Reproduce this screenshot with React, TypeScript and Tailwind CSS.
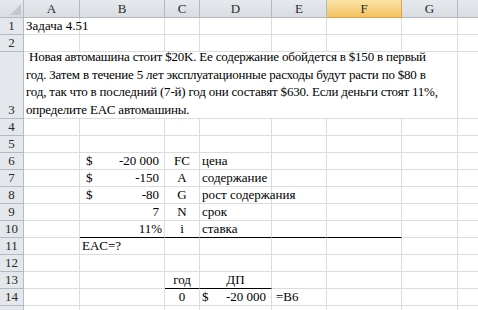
import React from 'react'

const letters = ['A', 'B', 'C', 'D', 'E', 'F', 'G', '']

// grid lines live on every cell as right + bottom borders
const cell = 'border-r border-b border-[#dadcdd] flex items-end px-[2px] leading-[16px] whitespace-nowrap overflow-visible'

const ColHead = ({ l, selected }: { l: string; selected?: boolean }) => (
  <div
    className={
      selected
        ? 'flex items-center justify-center border-r border-b border-[#e4a04a] bg-gradient-to-b from-[#fbe3a6] to-[#f2c45f] text-[#2a2a2a] leading-[16px]'
        : 'flex items-center justify-center border-r border-b border-[#b5bac1] bg-gradient-to-b from-[#e6e9ed] to-[#d9dde2] text-[#2a2a2a] leading-[16px]'
    }
  >
    {l}
  </div>
)

const RowHead = ({ n }: { n: number }) => (
  <div className="flex items-end justify-center border-r border-b border-[#b5bac1] bg-[#e4e7ec] text-[#2a2a2a] leading-[16px]">
    {n}
  </div>
)

const Money = ({ v, cur, narrow }: { v: string; cur?: boolean; narrow?: boolean }) => (
  <div className={`${cell} justify-between ${narrow ? 'pl-[2px]' : 'pl-[6px]'} pr-[5px]`}>
    <span>{cur ? '$' : ''}</span>
    <span>{v}</span>
  </div>
)

const Empty = ({ thick }: { thick?: boolean }) => (
  <div className={`${cell} ${thick ? 'border-b-black' : ''}`} />
)

export default function App() {
  return (
    <div className="w-[478px] h-[310px] overflow-hidden bg-white font-['Liberation_Serif','Times_New_Roman',serif] text-[13px] text-black">
      <div className="grid grid-cols-[24px_56px_85px_35px_72px_55px_75px_56px_60px] grid-rows-[18px_17px_17px_67px] auto-rows-[17px] w-[538px]">
        {/* header row */}
        <div className="border-r border-b border-[#b5bac1] bg-gradient-to-b from-[#e6e9ed] to-[#d9dde2] relative">
          <div className="absolute right-[2px] bottom-[2px] w-0 h-0 border-l-[11px] border-l-transparent border-b-[11px] border-b-[#c3c7cc]" />
        </div>
        {letters.map((l, i) => (
          <ColHead key={i} l={l} selected={l === 'F'} />
        ))}

        {/* 1 */}
        <RowHead n={1} />
        <div className={cell}>Задача 4.51</div>
        <Empty /><Empty /><Empty /><Empty /><Empty /><Empty /><Empty />

        {/* 2 */}
        <RowHead n={2} />
        <Empty /><Empty /><Empty /><Empty /><Empty /><Empty /><Empty /><Empty />

        {/* 3 merged A:G, wrapped like the sheet */}
        <RowHead n={3} />
        <div className="col-span-7 border-r border-b border-[#dadcdd] px-[2px] leading-[17.5px] flex items-end">
          <p className="whitespace-nowrap tracking-[-0.2px]">
            &nbsp;Новая автомашина стоит $20K. Ее содержание обойдется в $150 в первый
            <br />
            год. Затем в течение 5 лет эксплуатационные расходы будут расти по $80 в
            <br />
            год, так что в последний (7-й) год они составят $630. Если деньги стоят 11%,
            <br />
            определите EAC автомашины.
          </p>
        </div>
        <Empty />

        {/* 4, 5 */}
        <RowHead n={4} />
        <Empty /><Empty /><Empty /><Empty /><Empty /><Empty /><Empty /><Empty />
        <RowHead n={5} />
        <Empty /><Empty /><Empty /><Empty /><Empty /><Empty /><Empty /><Empty />

        {/* 6 */}
        <RowHead n={6} />
        <Empty />
        <Money cur v="-20 000" />
        <div className={`${cell} justify-center`}>FC</div>
        <div className={cell}>цена</div>
        <Empty /><Empty /><Empty /><Empty />

        {/* 7 */}
        <RowHead n={7} />
        <Empty />
        <Money cur v="-150" />
        <div className={`${cell} justify-center`}>A</div>
        <div className={cell}>содержание</div>
        <Empty /><Empty /><Empty /><Empty />

        {/* 8 */}
        <RowHead n={8} />
        <Empty />
        <Money cur v="-80" />
        <div className={`${cell} justify-center`}>G</div>
        <div className={cell}>рост содержания</div>
        <Empty /><Empty /><Empty /><Empty />

        {/* 9 */}
        <RowHead n={9} />
        <Empty />
        <Money v="7" />
        <div className={`${cell} justify-center`}>N</div>
        <div className={cell}>срок</div>
        <Empty /><Empty /><Empty /><Empty />

        {/* 10 */}
        <RowHead n={10} />
        <Empty />
        <div className={`${cell} justify-end pr-[2px] border-b-black`}>11%</div>
        <div className={`${cell} justify-center border-b-black`}>i</div>
        <div className={`${cell} border-b-black`}>ставка</div>
        <Empty thick /><Empty thick /><Empty /><Empty />

        {/* 11 */}
        <RowHead n={11} />
        <Empty />
        <div className={cell}>EAC=?</div>
        <Empty /><Empty /><Empty /><Empty /><Empty /><Empty />

        {/* 12 */}
        <RowHead n={12} />
        <Empty /><Empty /><Empty /><Empty /><Empty /><Empty /><Empty /><Empty />

        {/* 13 */}
        <RowHead n={13} />
        <Empty /><Empty />
        <div className={`${cell} justify-center border-b-black`}>год</div>
        <div className={`${cell} justify-center border-b-black`}>ДП</div>
        <Empty /><Empty /><Empty /><Empty />

        {/* 14 */}
        <RowHead n={14} />
        <Empty /><Empty />
        <div className={`${cell} justify-center`}>0</div>
        <Money cur narrow v="-20 000" />
        <div className={`${cell} pl-[4px]`}>=B6</div>
        <Empty /><Empty /><Empty />

        {/* 15 */}
        <RowHead n={15} />
        <Empty /><Empty /><Empty /><Empty /><Empty /><Empty /><Empty /><Empty />
      </div>
    </div>
  )
}
